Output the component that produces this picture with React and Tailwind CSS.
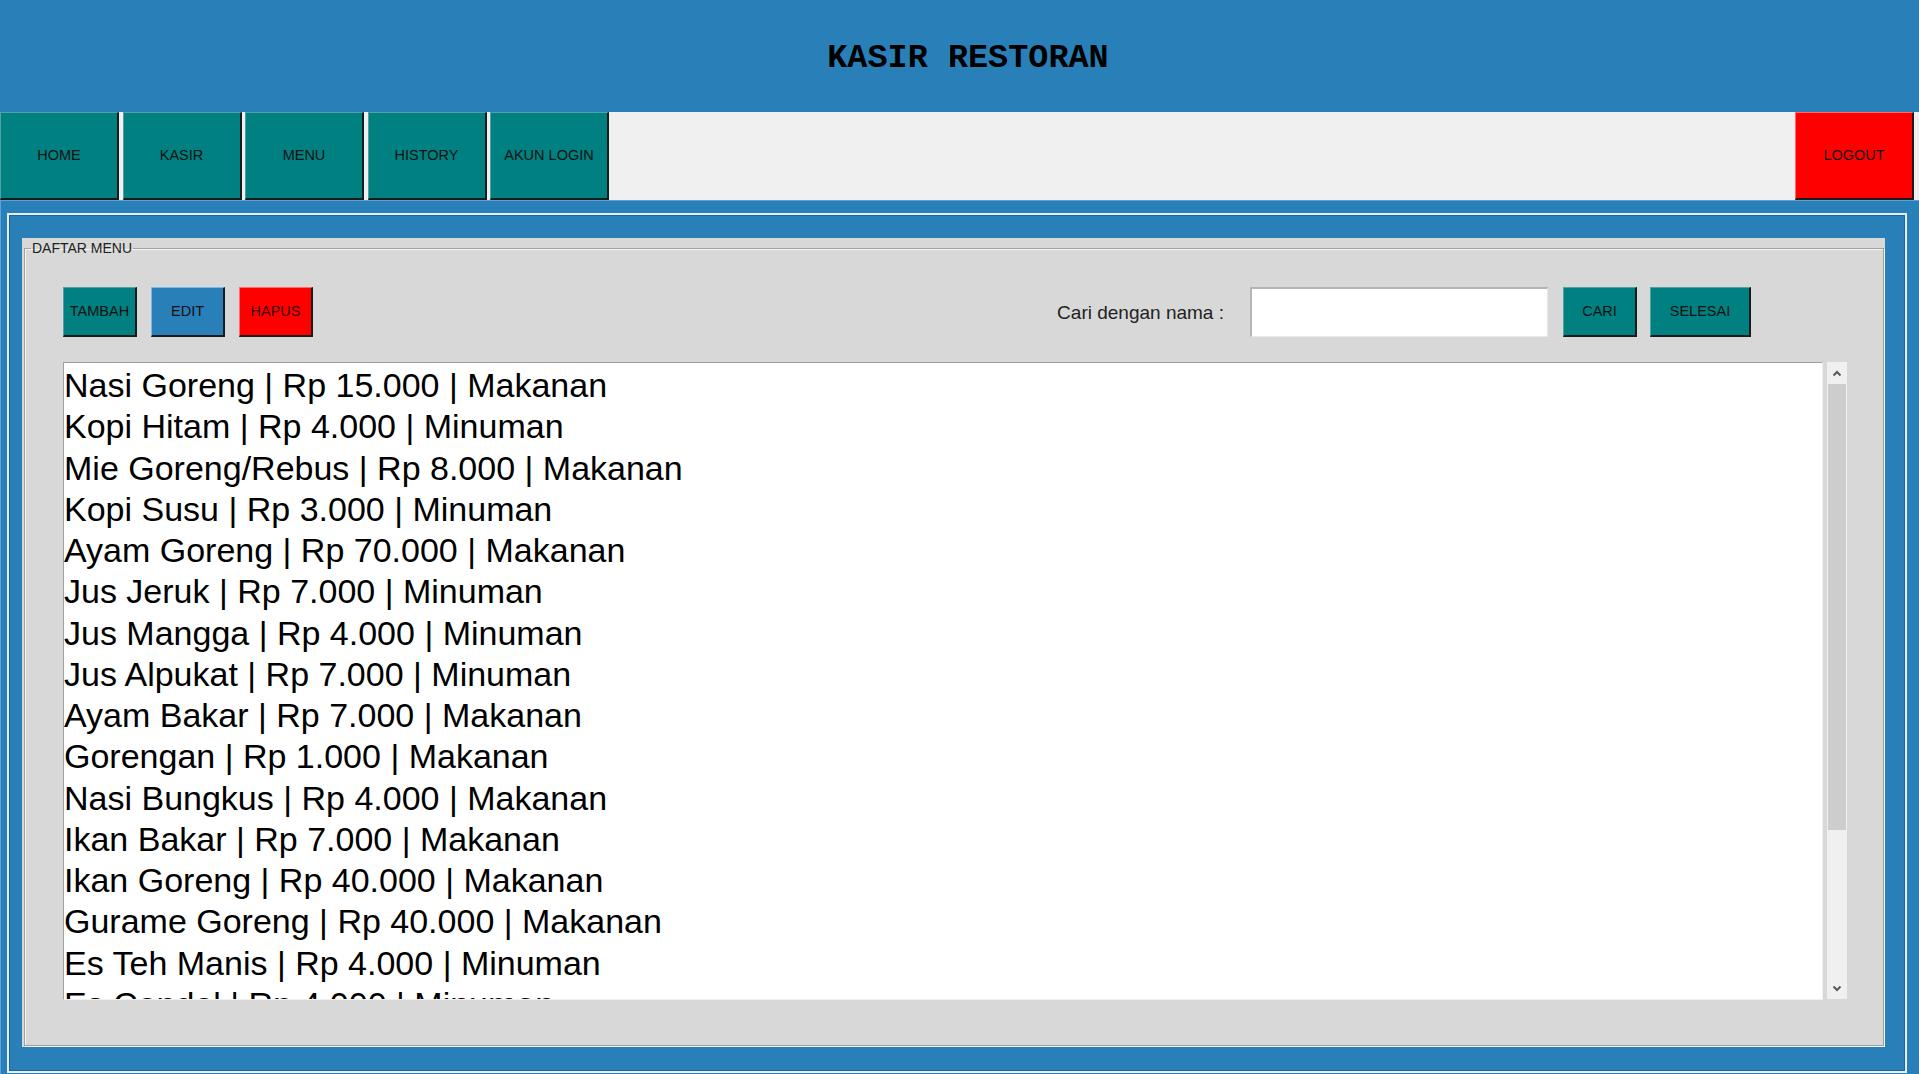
import React from 'react';

const menuItems = [
  'Nasi Goreng | Rp 15.000 | Makanan',
  'Kopi Hitam | Rp 4.000 | Minuman',
  'Mie Goreng/Rebus | Rp 8.000 | Makanan',
  'Kopi Susu | Rp 3.000 | Minuman',
  'Ayam Goreng | Rp 70.000 | Makanan',
  'Jus Jeruk | Rp 7.000 | Minuman',
  'Jus Mangga | Rp 4.000 | Minuman',
  'Jus Alpukat | Rp 7.000 | Minuman',
  'Ayam Bakar | Rp 7.000 | Makanan',
  'Gorengan | Rp 1.000 | Makanan',
  'Nasi Bungkus | Rp 4.000 | Makanan',
  'Ikan Bakar | Rp 7.000 | Makanan',
  'Ikan Goreng | Rp 40.000 | Makanan',
  'Gurame Goreng | Rp 40.000 | Makanan',
  'Es Teh Manis | Rp 4.000 | Minuman',
  'Es Cendol | Rp 4.000 | Minuman',
];

const navItems = ['HOME', 'KASIR', 'MENU', 'HISTORY', 'AKUN LOGIN'];

function Chevron({ up }) {
  return (
    <svg width="10" height="7" viewBox="0 0 10 7">
      <polyline
        points={up ? '1.5,5.5 5,2 8.5,5.5' : '1.5,1.5 5,5 8.5,1.5'}
        fill="none"
        stroke="#5a5a5a"
        strokeWidth="2"
      />
    </svg>
  );
}

export default function App() {
  return (
    <div className="w-[1919px] h-[1074px] overflow-hidden bg-[#2980b9] flex flex-col font-['Liberation_Sans',Arial,sans-serif]">
      {/* header */}
      <div className="h-[112px] shrink-0 flex items-center justify-center pl-[17px] pt-[4px]">
        <h1 className="font-['Liberation_Mono','Courier_New',monospace] font-bold text-[33.5px] text-black tracking-normal">
          KASIR RESTORAN
        </h1>
      </div>

      {/* nav */}
      <div className="h-[88px] shrink-0 flex bg-[#f0f0f0]">
        <div className="flex gap-[3.5px]">
          {navItems.map((item) => (
            <button
              key={item}
              className="w-[119px] h-full pt-[1px] bg-[#008080] border-t border-l border-[#4fa3a3] border-b-2 border-r-2 border-b-[#1a1a1a] border-r-[#1a1a1a] text-[14.5px] text-[#111]"
            >
              {item}
            </button>
          ))}
        </div>
        <button className="ml-auto mr-[5px] w-[119px] h-full pt-[1px] bg-[#ff0000] border-t border-l border-[#ff6a6a] border-b-2 border-r-2 border-b-[#1a1a1a] border-r-[#1a1a1a] text-[14.5px] text-[#111]">
          LOGOUT
        </button>
      </div>

      {/* main */}
      <div className="h-[874px] shrink-0 border-t border-l border-[#5fa3d6] pl-[6px] pr-[12px] pt-[12px] pb-[1px]">
        <div className="h-full border-2 border-[#e4eef7]">
          <div className="h-full border border-[#1d6499] pl-[12px] pr-[19px] pt-[22px] pb-[23px]">
            <div className="h-full bg-[#d8d8d8] pl-[2px] pr-[1px] pt-[2px] pb-[1px]">
              <fieldset className="h-full flex flex-col border border-[#a0a0a0] shadow-[inset_1px_1px_0_#f4f4f4,1px_1px_0_#f4f4f4]">
                <legend className="ml-[6px] px-[1px] text-[14px] leading-[16px] text-[#222]">DAFTAR MENU</legend>

                {/* toolbar */}
                <div className="mt-[31px] h-[50px] flex items-center pl-[38px] pr-[132px]">
                  <div className="flex gap-[14px] h-full">
                    <button className="w-[74px] h-full pt-[1px] bg-[#008080] border-t border-l border-[#4fa3a3] border-b-2 border-r-2 border-b-[#1a1a1a] border-r-[#1a1a1a] text-[14.5px] text-[#111]">
                      TAMBAH
                    </button>
                    <button className="w-[74px] h-full pt-[1px] bg-[#2980b9] border-t border-l border-[#7ab8e6] border-b-2 border-r-2 border-b-[#1a1a1a] border-r-[#1a1a1a] text-[14.5px] text-[#111]">
                      EDIT
                    </button>
                    <button className="w-[74px] h-full pt-[1px] bg-[#ff0000] border-t border-l border-[#ff6a6a] border-b-2 border-r-2 border-b-[#1a1a1a] border-r-[#1a1a1a] text-[14.5px] text-[#3a0000]">
                      HAPUS
                    </button>
                  </div>
                  <div className="ml-auto flex items-center h-full">
                    <span className="text-[19px] text-[#222] mr-[26px] pt-[2px]">Cari dengan nama :</span>
                    <input
                      type="text"
                      className="w-[298px] h-full bg-white border-t-2 border-l-2 border-[#b4b4b4] border-b border-r border-b-[#e8e8e8] border-r-[#e8e8e8] outline-none px-2 text-[18px]"
                    />
                    <button className="ml-[15px] w-[74px] h-full pt-[1px] bg-[#008080] border-t border-l border-[#4fa3a3] border-b-2 border-r-2 border-b-[#1a1a1a] border-r-[#1a1a1a] text-[14.5px] text-[#111]">
                      CARI
                    </button>
                    <button className="ml-[13px] w-[101px] h-full pt-[1px] bg-[#008080] border-t border-l border-[#4fa3a3] border-b-2 border-r-2 border-b-[#1a1a1a] border-r-[#1a1a1a] text-[14.5px] text-[#111]">
                      SELESAI
                    </button>
                  </div>
                </div>

                {/* list */}
                <div className="mt-[25px] h-[638px] flex pl-[38px]">
                  <div className="w-[1760px] h-full bg-white border-t border-l border-[#a0a0a0] border-r border-b border-r-[#f0f0f0] border-b-[#f0f0f0] overflow-hidden pt-[2px]">
                    {menuItems.map((item) => (
                      <div key={item} className="text-[34px] leading-[41.25px] text-black whitespace-nowrap">
                        {item}
                      </div>
                    ))}
                  </div>
                  <div className="ml-[4px] w-[20px] h-[637px] bg-[#f0f0f0] flex flex-col">
                    <div className="h-[22px] shrink-0 flex items-center justify-center">
                      <Chevron up />
                    </div>
                    <div className="mx-[1px] h-[446px] bg-[#cdcdcd]" />
                    <div className="flex-1" />
                    <div className="h-[22px] shrink-0 flex items-center justify-center">
                      <Chevron />
                    </div>
                  </div>
                </div>
              </fieldset>
            </div>
          </div>
        </div>
      </div>
    </div>
  );
}
